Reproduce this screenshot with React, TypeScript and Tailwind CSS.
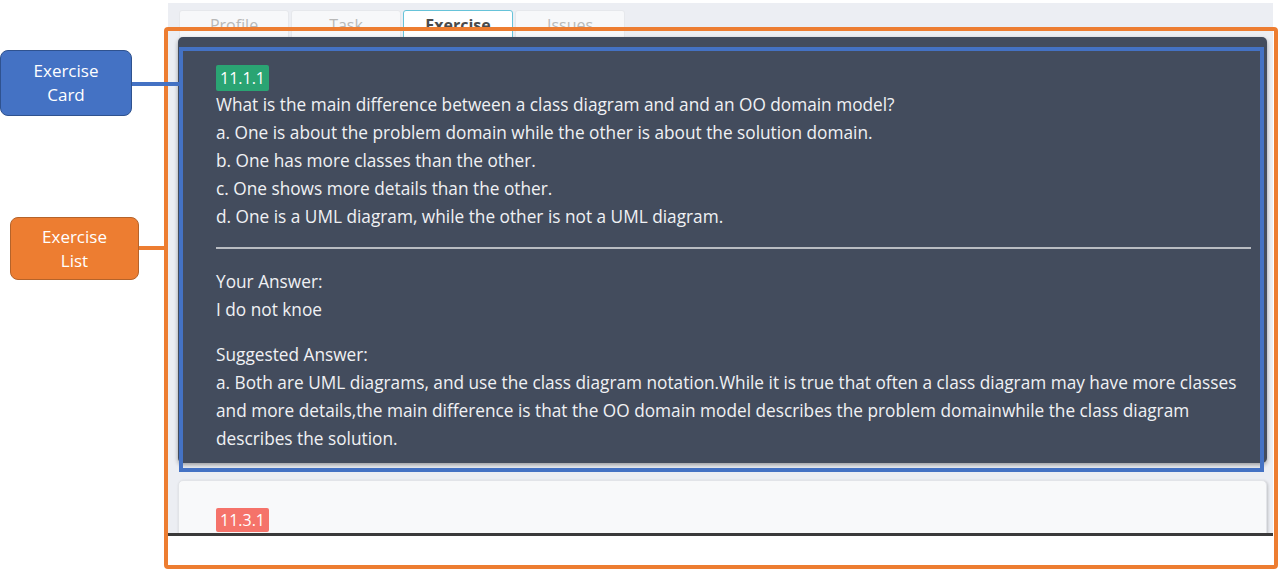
import React from "react";

const font = { fontFamily: '"Open Sans", "Noto Sans", sans-serif' };

function Tab({ label, active }: { label: string; active?: boolean }) {
  return (
    <div
      className={
        "w-[110px] h-[28px] rounded-t-[3px] border flex justify-center pt-[4px] text-[16px] leading-[20px] " +
        (active
          ? "bg-white border-[#66c3d9] text-[#4a4a4a] font-bold"
          : "bg-[#f7f8fa] border-[#e6e8ec] text-[#b8b8b8]")
      }
    >
      {label}
    </div>
  );
}

export default function App() {
  return (
    <div
      className="relative w-[1280px] h-[570px] overflow-hidden bg-white flex"
      style={font}
    >
      <div className="w-[168px] shrink-0" />
      <div className="w-[1105px] shrink-0 flex flex-col">
        <div className="mt-[3px] h-[530px] bg-[#eceef3] pl-[10px] pr-[6px] flex flex-col overflow-hidden">
          <div className="pt-[7px] pl-[1px] flex gap-[2px] h-[34px] shrink-0">
            <Tab label="Profile" />
            <Tab label="Task" />
            <Tab label="Exercise" active />
            <Tab label="Issues" />
          </div>
          <div className="shrink-0 bg-[#434c5d] rounded-[5px] shadow-[0_2px_4px_rgba(0,0,0,0.35)] pl-[38px] pr-[16px] pt-[28px] pb-[10px] text-[17.25px] font-medium leading-[28px] text-[#f0f1f4]">
            <div className="flex">
              <span className="bg-[#2aa473] text-white text-[16px] font-medium leading-[26px] px-[4px] rounded-[2px]">
                11.1.1
              </span>
            </div>
            <div>What is the main difference between a class diagram and and an OO domain model?</div>
            <div>a. One is about the problem domain while the other is about the solution domain.</div>
            <div>b. One has more classes than the other.</div>
            <div>c. One shows more details than the other.</div>
            <div>d. One is a UML diagram, while the other is not a UML diagram.</div>
            <div className="mt-[16px] mb-[19px] h-[2px] bg-[#b9bcc2]" />
            <div>Your Answer:</div>
            <div>I do not knoe</div>
            <div className="mt-[17px]">Suggested Answer:</div>
            <div>
              a. Both are UML diagrams, and use the class diagram notation.While it is true that often a class diagram may have more classes and more details,the main difference is that the OO domain model describes the problem domainwhile the class diagram describes the solution.
            </div>
          </div>
          <div className="mt-[17px] shrink-0 h-[80px] bg-[#f8f9fa] rounded-t-[5px] border border-[#e2e4e8] shadow-[1px_1px_3px_rgba(0,0,0,0.2)] pl-[37px] pt-[27px]">
            <div className="flex">
              <span className="bg-[#f5736a] text-white text-[16px] font-medium leading-[24px] px-[4px] rounded-[2px]">
                11.3.1
              </span>
            </div>
          </div>
        </div>
        <div className="h-[3px] bg-[#3a3a3a]" />
      </div>

      {/* Annotation: Exercise List (orange) */}
      <div className="absolute left-[164px] top-[27px] w-[1114px] h-[542px] border-[4px] border-[#ed7d31] rounded-[4px]" />
      <div className="absolute left-[139px] top-[246px] w-[27px] h-[4px] bg-[#ed7d31]" />
      <div className="absolute left-[10px] top-[217px] w-[129px] h-[63px] rounded-[8px] bg-[#ed7d31] border border-[#b5632a] flex flex-col items-center justify-center text-white text-[17px] leading-[24px]">
        <span>Exercise</span>
        <span>List</span>
      </div>

      {/* Annotation: Exercise Card (blue) */}
      <div className="absolute left-[179px] top-[47px] w-[1085px] h-[425px] border-[4px] border-[#4472c4]" />
      <div className="absolute left-[132px] top-[82px] w-[49px] h-[4px] bg-[#4472c4]" />
      <div className="absolute left-0 top-[50px] w-[132px] h-[66px] rounded-[8px] bg-[#4472c4] border border-[#2f528f] flex flex-col items-center justify-center text-white text-[17px] leading-[24px]">
        <span>Exercise</span>
        <span>Card</span>
      </div>
    </div>
  );
}
